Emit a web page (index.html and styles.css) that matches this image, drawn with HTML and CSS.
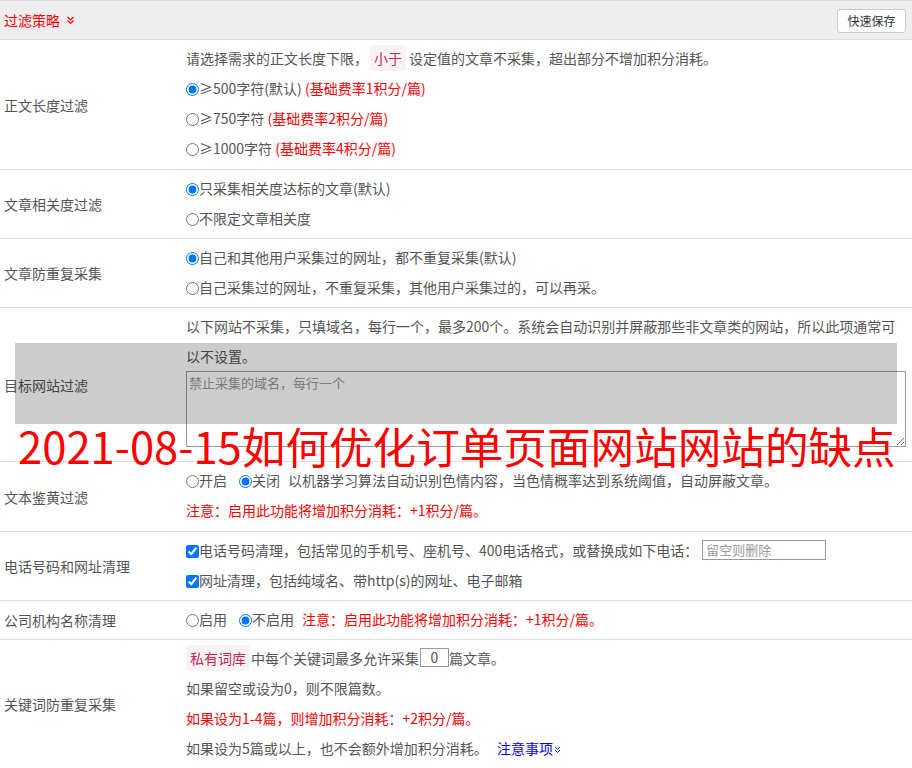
FILE: index.html
```html
<!DOCTYPE html>
<html lang="zh-CN">
<head>
<meta charset="utf-8">
<title>过滤策略</title>
<link rel="stylesheet" href="styles.css">
</head>
<body>
<div class="panel">
  <div class="head">
    <span class="title">过滤策略<svg class="chev" width="9" height="9" viewBox="0 0 9 9"><polyline points="1.5,1 4.5,4 7.5,1" fill="none" stroke="#f00" stroke-width="1.2"/><polyline points="1.5,4.5 4.5,7.5 7.5,4.5" fill="none" stroke="#f00" stroke-width="1.2"/></svg></span>
    <button class="btn" type="button">快速保存</button>
  </div>

  <div class="row row-tall">
    <div class="label">正文长度过滤</div>
    <div class="content">
      <div class="line">请选择需求的正文长度下限，<span class="tag">小于</span>设定值的文章不采集，超出部分不增加积分消耗。</div>
      <div class="line"><label><input type="radio" name="len" checked>≥500字符(默认)</label> <span class="red">(基础费率1积分/篇)</span></div>
      <div class="line"><label><input type="radio" name="len">≥750字符</label> <span class="red">(基础费率2积分/篇)</span></div>
      <div class="line"><label><input type="radio" name="len">≥1000字符</label> <span class="red">(基础费率4积分/篇)</span></div>
    </div>
  </div>

  <div class="row">
    <div class="label">文章相关度过滤</div>
    <div class="content">
      <div class="line"><label><input type="radio" name="rel" checked>只采集相关度达标的文章(默认)</label></div>
      <div class="line"><label><input type="radio" name="rel">不限定文章相关度</label></div>
    </div>
  </div>

  <div class="row">
    <div class="label">文章防重复采集</div>
    <div class="content">
      <div class="line"><label><input type="radio" name="dup" checked>自己和其他用户采集过的网址，都不重复采集(默认)</label></div>
      <div class="line"><label><input type="radio" name="dup">自己采集过的网址，不重复采集，其他用户采集过的，可以再采。</label></div>
    </div>
  </div>

  <div class="row">
    <div class="label">目标网站过滤</div>
    <div class="content">
      <div class="line wrap">以下网站不采集，只填域名，每行一个，最多200个。系统会自动识别并屏蔽那些非文章类的网站，所以此项通常可以不设置。</div>
      <textarea class="domains" placeholder="禁止采集的域名，每行一个"></textarea>
    </div>
  </div>

  <div class="row row-tall">
    <div class="label">文本鉴黄过滤</div>
    <div class="content">
      <div class="line"><label class="opt"><input type="radio" name="porn">开启</label><label class="opt"><input type="radio" name="porn" checked>关闭</label><span class="desc">以机器学习算法自动识别色情内容，当色情概率达到系统阈值，自动屏蔽文章。</span></div>
      <div class="line red">注意：启用此功能将增加积分消耗：+1积分/篇。</div>
    </div>
  </div>

  <div class="row">
    <div class="label">电话号码和网址清理</div>
    <div class="content">
      <div class="line"><label><input type="checkbox" checked>电话号码清理，包括常见的手机号、座机号、400电话格式，或替换成如下电话：</label><input class="phone" type="text" placeholder="留空则删除"></div>
      <div class="line"><label><input type="checkbox" checked>网址清理，包括纯域名、带http(s)的网址、电子邮箱</label></div>
    </div>
  </div>

  <div class="row">
    <div class="label">公司机构名称清理</div>
    <div class="content">
      <div class="line"><label class="opt"><input type="radio" name="org">启用</label><label class="opt"><input type="radio" name="org" checked>不启用</label><span class="red desc">注意：启用此功能将增加积分消耗：+1积分/篇。</span></div>
    </div>
  </div>

  <div class="row">
    <div class="label">关键词防重复采集</div>
    <div class="content">
      <div class="line"><span class="tag tag-l">私有词库</span>中每个关键词最多允许采集<input class="num" type="text" value="0">篇文章。</div>
      <div class="line">如果留空或设为0，则不限篇数。</div>
      <div class="line red">如果设为1-4篇，则增加积分消耗：+2积分/篇。</div>
      <div class="line">如果设为5篇或以上，也不会额外增加积分消耗。 <a class="link" href="#">注意事项<svg class="chev-s" width="7" height="8" viewBox="0 0 7 8"><polyline points="1,1 3.5,3.5 6,1" fill="none" stroke="#00f" stroke-width="1"/><polyline points="1,4 3.5,6.5 6,4" fill="none" stroke="#00f" stroke-width="1"/></svg></a></div>
    </div>
  </div>
</div>

<div class="mask"></div>
<div class="watermark">2021-08-15如何优化订单页面网站网站的缺点</div>
</body>
</html>
```

FILE: styles.css
```css
* { box-sizing: border-box; }
html, body { margin: 0; padding: 0; background: #fff; }
body {
  font-family: "Noto Sans CJK SC", "Noto Sans", sans-serif;
  font-size: 14px;
  color: #555;
  position: relative;
}
.panel { width: 912px; }
.head {
  height: 40px;
  background: #eee;
  border-top: 1px solid #ddd;
  border-bottom: 1px solid #ddd;
  display: flex;
  align-items: center;
  justify-content: space-between;
  padding: 0 6px 0 4px;
}
.title { color: #f00; font-size: 14px; display: flex; align-items: center; }
.chev { margin-left: 6px; margin-top: 1px; }
.btn {
  font-family: "Noto Sans CJK SC", sans-serif;
  font-size: 12px;
  color: #333;
  background: #fff;
  border: 1px solid #ccc;
  border-radius: 3px;
  width: 69px;
  height: 24px;
  padding: 0;
  line-height: 22px;
  margin-top: 1px;
}
.row {
  display: grid;
  grid-template-columns: 186px 1fr;
  border-bottom: 1px solid #ddd;
}
.label {
  display: flex;
  align-items: center;
  padding-left: 4px;
  color: #555;
}
.content { padding: 3px 6px 5px 0; }
.row-tall .content { padding-bottom: 6px; }
.line { line-height: 30px; height: 30px; white-space: nowrap; }
.line.wrap { height: auto; white-space: normal; }
label { cursor: default; }
input[type=radio], input[type=checkbox] {
  margin: 0;
  width: 13px;
  height: 13px;
  vertical-align: -2px;
}
.opt { margin-right: 12px; }
.desc { margin-left: -4px; }
.red { color: #f00; }
.tag {
  color: #c7254e;
  background: #f9f2f4;
  border-radius: 4px;
  padding: 3px 4px;
  margin: 0 3px 0 2px;
  line-height: 20px;
}
.tag-l { margin-left: 0; margin-right: 1px; }
.domains {
  display: block;
  width: 720px;
  height: 76px;
  margin: 0 0 9px 0;
  border: 1px solid #999;
  padding: 2px 2px;
  font-family: "Noto Sans CJK SC", sans-serif;
  font-size: 13px;
  line-height: 18px;
  color: #555;
  resize: both;
}
.domains::placeholder { color: #999; }
.phone {
  width: 124px;
  height: 20px;
  border: 1px solid #999;
  padding: 0 3px;
  font-family: "Noto Sans CJK SC", sans-serif;
  font-size: 13px;
  vertical-align: 1px;
  margin-left: 4px;
}
.phone::placeholder { color: #999; }
.num {
  width: 29px;
  height: 19px;
  border: 1px solid #999;
  padding: 0;
  margin-left: 1px;
  text-align: center;
  font-family: "Noto Sans CJK SC", sans-serif;
  font-size: 14px;
  color: #555;
  vertical-align: 1px;
}
.link { color: #00f; text-decoration: none; margin-left: 6px; }
.chev-s { margin-left: 1px; vertical-align: 0; }
.mask {
  position: absolute;
  left: 15px;
  top: 343px;
  width: 882px;
  height: 81px;
  background: rgba(0, 0, 0, 0.2);
}
.watermark {
  position: absolute;
  left: 18px;
  top: 426px;
  font-size: 43.6px;
  line-height: 38px;
  color: #f00;
  white-space: nowrap;
}
```
